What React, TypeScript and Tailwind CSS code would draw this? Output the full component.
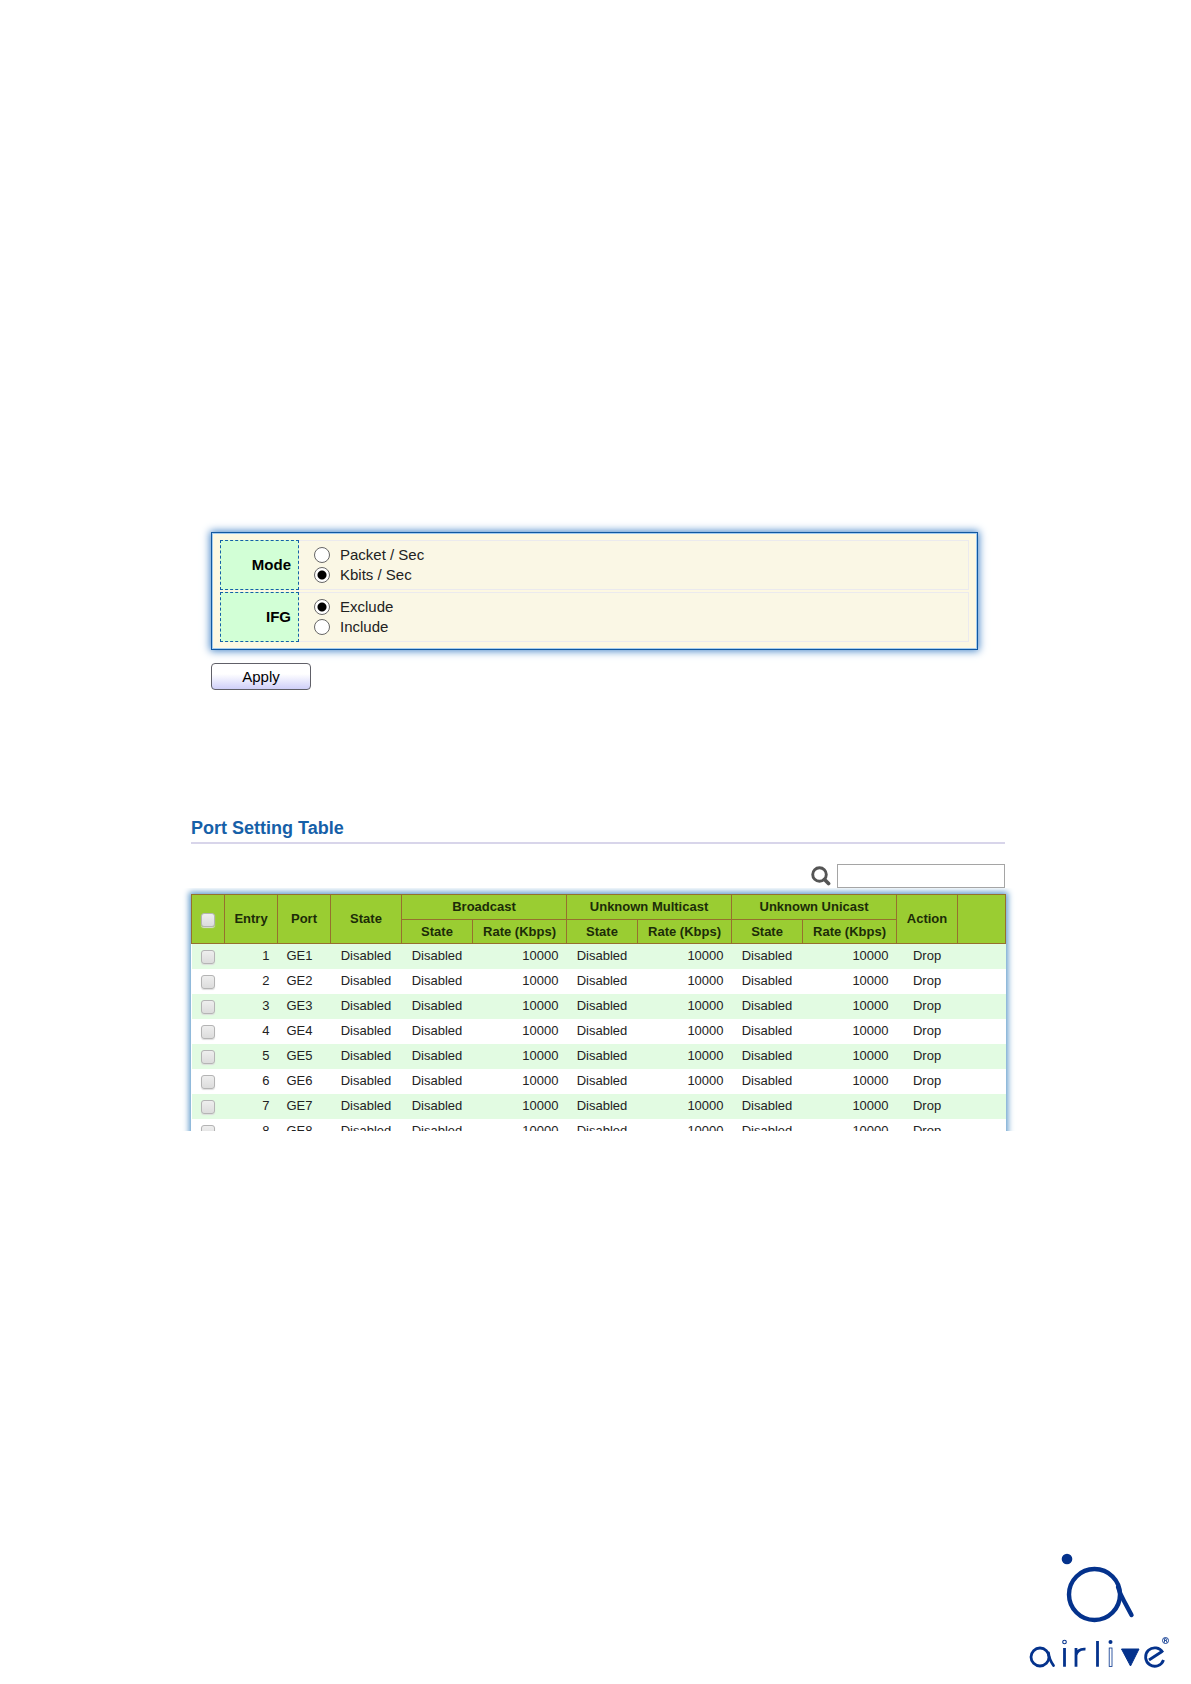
import React, { useState } from "react";

const modes = ["Packet / Sec", "Kbits / Sec"];
const ifgs = ["Exclude", "Include"];
const ports = [1, 2, 3, 4, 5, 6, 7, 8];
const groups = ["Broadcast", "Unknown Multicast", "Unknown Unicast"];
const columns = [
  "w-[33px]", "w-[53px]", "w-[53px]", "w-[71px]",
  "w-[71px]", "w-[94px]", "w-[71px]", "w-[94px]", "w-[71px]", "w-[94px]",
  "w-[61px]", "w-[48px]",
];

function RadioRow({ label, name, options, initial }: { label: string; name: string; options: string[]; initial: string }) {
  const [value, setValue] = useState(initial);
  return (
    <fieldset className="flex" aria-label={label}>
      <div className="flex w-[79px] shrink-0 items-center justify-end border border-dashed border-[#1460a8] bg-[#d2ffd6] pr-[7px] text-black">
        <span className="font-bold">{label}</span>
      </div>
      <div className="flex-1 border border-l-0 border-[#ebeaee] bg-[#faf7e5] py-1 pl-[15px]">
        {options.map((o) => (
          <label key={o} className="flex h-5 items-center gap-2.5">
            <input
              type="radio"
              name={name}
              checked={value === o}
              onChange={() => setValue(o)}
              className="h-4 w-4 appearance-none rounded-full border border-[#666] bg-white checked:bg-[radial-gradient(circle,#000_4px,#fff_5px)]"
            />
            {o}
          </label>
        ))}
      </div>
    </fieldset>
  );
}

function Check({ label }: { label: string }) {
  return (
    <input
      type="checkbox"
      aria-label={label}
      className="mx-auto mt-px block h-3.5 w-3.5 appearance-none rounded-[3px] border border-[#b4b4b4] bg-linear-to-b from-[#eeeeee] to-[#dcdcdc] shadow-[0_1px_1px_#ddd] checked:bg-[#777]"
    />
  );
}

function Logo() {
  return (
    <svg viewBox="0 0 144 120" className="h-[120px] w-36" fill="none" stroke="#04328c" role="img" aria-label="airlive">
      <circle cx="40" cy="9" r="5.3" fill="#04328c" stroke="none" />
      <circle cx="67.5" cy="44.5" r="25.5" strokeWidth="4.4" />
      <path d="M91 37 Q93 44 97 51 L104.500 65" strokeWidth="4.4" strokeLinecap="round" />
      <g strokeWidth="2.800">
        <circle cx="13" cy="107" r="9" />
        <path d="M21.500 103 Q22 109 26.500 115.500" strokeLinecap="round" />
        <path d="M37.500 98 V116.800 M49 116.800 V98 M49 105 Q51 98.500 58.500 99.200 M70.500 91 V116.800" />
        <path d="M122 110 L135 101.500" />
        <path d="M135.800 102.500 A9.200 9.200 0 1 0 136.500 110" />
      </g>
      <circle cx="37.500" cy="92" r="1.800" strokeWidth="1.100" />
      <circle cx="83.500" cy="92" r="2" fill="#04328c" stroke="none" />
      <rect x="82.200" y="98" width="2.800" height="18.500" strokeWidth="0.800" />
      <path d="M94.500 99 H112 L103.500 116 Z" fill="#04328c" strokeWidth="1" />
      <circle cx="138.500" cy="90.500" r="3" strokeWidth="0.900" />
      <path d="M137.500 92.500 V88.700 H139 Q140 89 139.500 90.500 H137.500 M139 90.500 L140 92.500" strokeWidth="0.800" />
    </svg>
  );
}

export default function App() {
  const head = "border border-[#96702e] p-0 font-bold";
  return (
    <div className="flex min-h-screen flex-col bg-white font-['Liberation_Sans',Arial,sans-serif] text-[#222]">
      <main className="flex-1 pt-[532px]">
        <form className="mr-[213px] ml-[211px] text-[15px] leading-5" onSubmit={(e) => e.preventDefault()}>
          <div className="flex flex-col gap-0.5 border border-[#1158a0] bg-[#fdf8e2] px-2 py-[7px] shadow-[0_0_8px_1px_#4585c8,inset_0_0_0_1px_#a5cdf0]">
            <RadioRow label="Mode" name="mode" options={modes} initial="Kbits / Sec" />
            <RadioRow label="IFG" name="ifg" options={ifgs} initial="Exclude" />
          </div>
          <button className="mt-[13px] block h-[27px] w-[100px] rounded-[4px] border border-[#606068] bg-linear-to-b from-white from-40% to-[#cfcff8] text-black">
            Apply
          </button>
        </form>

        <section className="mt-[126px]">
          <div className="mr-[186px] ml-[191px]">
            <h2 className="border-b-2 border-[#d8d5ea] pb-0.5 text-[18px] leading-6 font-bold text-[#1660a8]">Port Setting Table</h2>
            <label className="mt-5 flex items-center justify-end gap-1.5">
              <svg viewBox="0 0 20 20" className="h-5 w-5" fill="none" stroke="#555" aria-hidden="true">
                <circle cx="8.500" cy="8.500" r="6.800" strokeWidth="2.900" />
                <path d="M13.500 13.500 L17.500 17.500" strokeWidth="3.800" strokeLinecap="round" />
              </svg>
              <input type="text" aria-label="Search ports" className="h-6 w-[168px] border border-[#a5a5a5] bg-white px-1 text-[13px]" />
            </label>
          </div>
          <div className="h-[243px] overflow-hidden pt-1.5 pr-[187px] pl-[191px]">
            <table className="w-full table-fixed border-collapse bg-white text-[13px] leading-4 shadow-[0_0_6px_2px_#5f9acb]">
              <colgroup>
                {columns.map((c, i) => <col key={i} className={c} />)}
              </colgroup>
              <thead className="bg-[#9acd32] text-[#1c2c08]">
                <tr className="h-[25px]">
                  <th rowSpan={2} className={head}><Check label="Select all ports" /></th>
                  <th rowSpan={2} className={head}>Entry</th>
                  <th rowSpan={2} className={head}>Port</th>
                  <th rowSpan={2} className={head}>State</th>
                  {groups.map((g) => <th key={g} colSpan={2} className={head}>{g}</th>)}
                  <th rowSpan={2} className={head}>Action</th>
                  <th rowSpan={2} className={head} />
                </tr>
                <tr className="h-6">
                  {groups.map((g) => (
                    <React.Fragment key={g}>
                      <th className={head}>State</th>
                      <th className={head}>Rate (Kbps)</th>
                    </React.Fragment>
                  ))}
                </tr>
              </thead>
              <tbody>
                {ports.map((p) => (
                  <tr key={p} className="h-[25px] odd:bg-[#e2fbe2]">
                    <td className="p-0"><Check label={`Select port GE${p}`} /></td>
                    <td className="p-0 pr-2 text-right">{p}</td>
                    <td className="p-0 pl-[9px]">GE{p}</td>
                    <td className="p-0 text-center">Disabled</td>
                    {groups.map((g) => (
                      <React.Fragment key={g}>
                        <td className="p-0 text-center">Disabled</td>
                        <td className="p-0 pr-2 text-right">10000</td>
                      </React.Fragment>
                    ))}
                    <td className="p-0 text-center">Drop</td>
                    <td className="p-0" />
                  </tr>
                ))}
              </tbody>
            </table>
          </div>
        </section>
      </main>
      <footer className="flex justify-end pr-5 pb-[14px]">
        <Logo />
      </footer>
    </div>
  );
}
